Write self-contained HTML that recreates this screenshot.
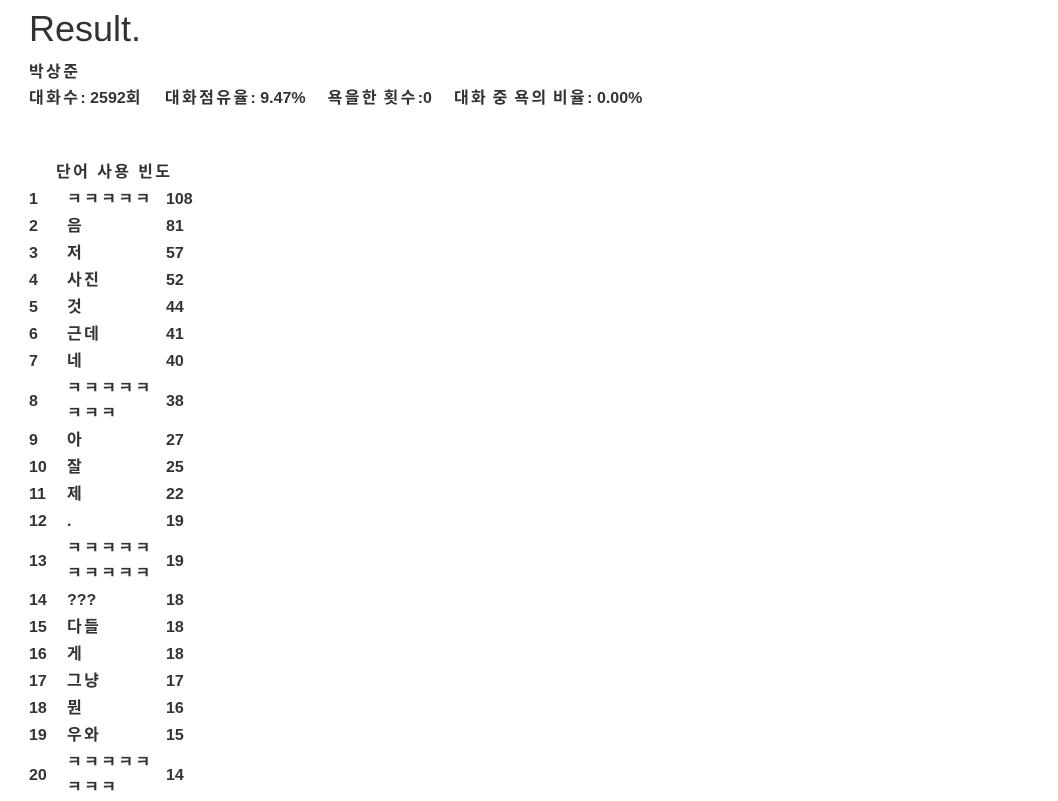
<!DOCTYPE html>
<html><head><meta charset="utf-8"><style>
body{margin:0;background:#fff;color:#333;font-family:"Liberation Sans","Noto Sans CJK KR",sans-serif;}
.wrap{padding-left:29px;}
h1{font-size:36px;font-weight:normal;margin:0;padding-top:9px;line-height:40px;}
.info{font-weight:bold;font-size:16px;line-height:26px;margin-top:11px;}
.k{letter-spacing:2.4px;}
.g{display:inline-block;width:22px;}
.hd{font-weight:bold;font-size:16px;margin-top:48px;padding-left:27px;line-height:26px;letter-spacing:2.4px;}
table{border-collapse:collapse;font-weight:bold;font-size:16px;}
td{padding:1px 0;line-height:25px;vertical-align:middle;}
td.a{width:38px;}
td.b{width:88px;padding-right:11px;letter-spacing:2.4px;}
td.q{letter-spacing:0;}
</style></head><body><div class="wrap">
<h1>Result.</h1>
<div class="info"><span class="k">박상준</span><br><span class="k">대화수</span>: 2592<span class="k">회</span><span class="g"></span><span class="k">대화점유율</span>: 9.47%<span class="g"></span><span class="k">욕을한</span> <span class="k">횟수</span>:0<span class="g"></span><span class="k">대화</span> <span class="k">중</span> <span class="k">욕의</span> <span class="k">비율</span>: 0.00%</div>
<div class="hd">단어 사용 빈도</div>
<table>
<tr><td class="a">1</td><td class="b">ㅋㅋㅋㅋㅋ</td><td>108</td></tr>
<tr><td class="a">2</td><td class="b">음</td><td>81</td></tr>
<tr><td class="a">3</td><td class="b">저</td><td>57</td></tr>
<tr><td class="a">4</td><td class="b">사진</td><td>52</td></tr>
<tr><td class="a">5</td><td class="b">것</td><td>44</td></tr>
<tr><td class="a">6</td><td class="b">근데</td><td>41</td></tr>
<tr><td class="a">7</td><td class="b">네</td><td>40</td></tr>
<tr><td class="a">8</td><td class="b">ㅋㅋㅋㅋㅋ<br>ㅋㅋㅋ</td><td>38</td></tr>
<tr><td class="a">9</td><td class="b">아</td><td>27</td></tr>
<tr><td class="a">10</td><td class="b">잘</td><td>25</td></tr>
<tr><td class="a">11</td><td class="b">제</td><td>22</td></tr>
<tr><td class="a">12</td><td class="b">.</td><td>19</td></tr>
<tr><td class="a">13</td><td class="b">ㅋㅋㅋㅋㅋ<br>ㅋㅋㅋㅋㅋ</td><td>19</td></tr>
<tr><td class="a">14</td><td class="b q">???</td><td>18</td></tr>
<tr><td class="a">15</td><td class="b">다들</td><td>18</td></tr>
<tr><td class="a">16</td><td class="b">게</td><td>18</td></tr>
<tr><td class="a">17</td><td class="b">그냥</td><td>17</td></tr>
<tr><td class="a">18</td><td class="b">뭔</td><td>16</td></tr>
<tr><td class="a">19</td><td class="b">우와</td><td>15</td></tr>
<tr><td class="a">20</td><td class="b">ㅋㅋㅋㅋㅋ<br>ㅋㅋㅋ</td><td>14</td></tr>
</table>
</div></body></html>
